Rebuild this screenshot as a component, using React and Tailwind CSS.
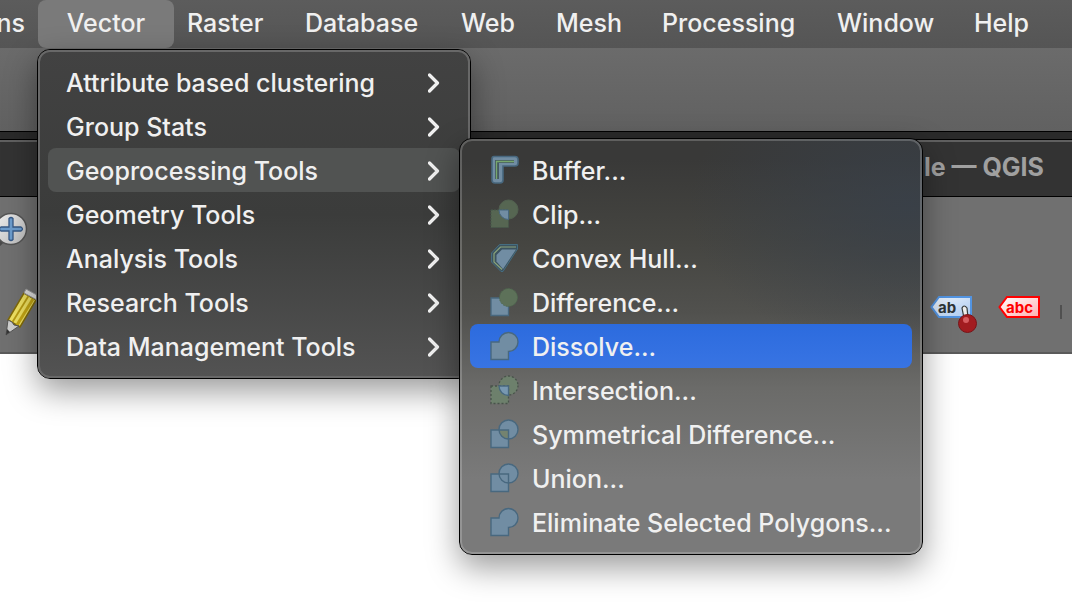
import React from "react";

const menuBar = [
  { label: "Raster", width: "w-[118px]" },
  { label: "Database", width: "w-[156px]" },
  { label: "Web", width: "w-[95px]" },
  { label: "Mesh", width: "w-[106px]" },
  { label: "Processing", width: "w-[175px]" },
  { label: "Window", width: "w-[137px]" },
  { label: "Help", width: "w-[98px]" },
];

const vectorMenu = [
  "Attribute based clustering",
  "Group Stats",
  "Geoprocessing Tools",
  "Geometry Tools",
  "Analysis Tools",
  "Research Tools",
  "Data Management Tools",
];

const tools = [
  { label: "Buffer...", icon: "buffer" },
  { label: "Clip...", icon: "clip" },
  { label: "Convex Hull...", icon: "hull" },
  { label: "Difference...", icon: "difference" },
  { label: "Dissolve...", icon: "dissolve" },
  { label: "Intersection...", icon: "intersection" },
  { label: "Symmetrical Difference...", icon: "symmetrical" },
  { label: "Union...", icon: "union" },
  { label: "Eliminate Selected Polygons...", icon: "dissolve" },
];

const BLUE = "#718da3";
const EDGE = "#48687f";
const GREEN = "#566652";

function ToolIcon({ name }) {
  const lens = "M9 11H18.5V20.5A9.5 9.5 0 0 1 9 11Z";
  const square = "M1 11H18.5V28.5H1Z";
  const merged = "M1 11H9A9.5 9.5 0 1 1 18.5 20.5V28.5H1Z";
  return (
    <svg className="h-[30px] w-[30px] shrink-0" viewBox="0 0 30 30" fill="none" aria-hidden="true">
      {name === "buffer" && (
        <>
          <path d="M4 1.500H25Q28 1.500 28 4.500V8Q28 11 25 11H13V25Q13 28 10 28H5Q2 28 2 25V4Q2 1.500 4 1.500Z" fill={BLUE} stroke={EDGE} strokeWidth="1.600" />
          <path d="M5 24V5H24V8H9V24Z" fill="#455a61" />
          <path d="M6.5 24V6.5H24" stroke="#77a76d" strokeWidth="1.3" />
        </>
      )}
      {name === "clip" && (
        <>
          <circle cx="18.5" cy="10.500" r="9.500" fill={GREEN} stroke="#526150" />
          <path d={square} fill={GREEN} stroke="#47584b" strokeDasharray="2 1" />
          <path d={lens} fill={BLUE} stroke={EDGE} />
        </>
      )}
      {name === "hull" && (
        <>
          <path d="M9.5 1.500H27.500V6L13 28.500H11L1.500 19V10Z" fill="#3c5360" stroke="#456d80" strokeWidth="1" />
          <path d="M26 4H10.500L4 10.500V19L12 26.500" stroke="#8ba47a" strokeWidth="1.2" />
          <path d="M12 6.500H26L13 26L6.500 18.500V12Z" fill={BLUE} />
        </>
      )}
      {name === "difference" && (
        <>
          <path d={square} fill={BLUE} stroke={EDGE} strokeWidth="1.3" />
          <circle cx="18.5" cy="10.500" r="9" fill="#5d7159" stroke="#4e674e" strokeDasharray="2 1" />
        </>
      )}
      {name === "dissolve" && <path d={merged} fill={BLUE} stroke={EDGE} strokeWidth="1.4" />}
      {name === "intersection" && (
        <>
          <circle cx="18.5" cy="10.500" r="9.500" fill="#6d806c" stroke="#48534a" strokeWidth="1.3" strokeDasharray="2 2" />
          <path d={square} fill="#6d806c" stroke="#48534a" strokeWidth="1.3" strokeDasharray="2 2" />
          <path d={lens} fill="#7898b1" stroke={EDGE} strokeWidth="1.3" />
        </>
      )}
      {(name === "symmetrical" || name === "union") && (
        <>
          <path d={square} fill={BLUE} />
          <circle cx="18.5" cy="10.500" r="9.500" fill={BLUE} />
          {name === "symmetrical" && <path d={lens} fill="#74836f" />}
          <path d={square} stroke={EDGE} strokeWidth="1.4" />
          <circle cx="18.5" cy="10.500" r="9.500" stroke={EDGE} strokeWidth="1.4" />
        </>
      )}
    </svg>
  );
}

function Chevron() {
  return (
    <svg className="h-5 w-3 shrink-0" viewBox="0 0 12 20" fill="none" aria-hidden="true">
      <path d="M1.500 2L9.500 10L1.500 18" stroke="#f0f0f0" strokeWidth="3.200" strokeLinecap="round" strokeLinejoin="round" />
    </svg>
  );
}

function ZoomIcon() {
  return (
    <svg className="h-9 w-7" viewBox="0 0 28 36" fill="none" aria-hidden="true">
      <defs>
        <linearGradient id="glass" x1="0" y1="0" x2="1" y2="1">
          <stop offset="0" stopColor="#eeeeee" />
          <stop offset="1" stopColor="#b9b9b9" />
        </linearGradient>
      </defs>
      <path d="M-2 32L3 27" stroke="#494949" strokeWidth="6" />
      <circle cx="11" cy="17" r="15.500" fill="url(#glass)" stroke="#545454" strokeWidth="1.500" />
      <path d="M9 6.500Q11 4.500 13 6.500V15H21Q24 17 21 19H13V27.500Q11 29.500 9 27.500V19H1Q-2 17 1 15H9Z" fill="#6c9ccc" stroke="#365884" strokeWidth="1.300" />
    </svg>
  );
}

function PencilIcon() {
  return (
    <svg className="h-12 w-9" viewBox="0 0 36 48" fill="none" aria-hidden="true">
      <path d="M24 5L36 12L20 39L8 32Z" fill="#eee062" stroke="#806a08" strokeWidth="1.500" />
      <path d="M28.500 8L12.500 34" stroke="#b79b13" strokeWidth="1.800" />
      <path d="M33 11L17 37" stroke="#c3a514" strokeWidth="3" />
      <path d="M26 1L37 7V12L24 5Z" fill="#dedede" stroke="#969696" />
      <path d="M8 32L12 34L14 37L19 38L6 47Z" fill="#cfcfcf" stroke="#555" />
      <path d="M7 41L10 44L6 47Z" fill="#343434" />
    </svg>
  );
}

function PinnedLabelIcon() {
  return (
    <svg className="h-10 w-12" viewBox="0 0 48 40" aria-hidden="true">
      <defs>
        <linearGradient id="blueTag" x1="0" y1="0" x2="1" y2="1">
          <stop offset="0" stopColor="#f1f6fc" />
          <stop offset="1" stopColor="#a8c8f0" />
        </linearGradient>
      </defs>
      <path d="M9 4H41V24H9L1.500 14Z" fill="url(#blueTag)" stroke="#5294e2" strokeWidth="2" />
      <text x="8" y="20" fontSize="15" fontWeight="700" fontFamily="Inter, sans-serif" fill="#2e3436">ab</text>
      <path d="M32 15Q34 11 37 15L38 25H34Z" fill="#eeeeec" stroke="#363b3b" strokeWidth="1.200" />
      <circle cx="37.500" cy="30.500" r="9" fill="#a21c20" stroke="#791418" />
      <circle cx="36" cy="27" r="3" fill="#d65c60" />
    </svg>
  );
}

function RedLabelIcon() {
  return (
    <svg className="h-10 w-11" viewBox="0 0 44 40" aria-hidden="true">
      <defs>
        <linearGradient id="redTag" x1="0" y1="0" x2="1" y2="1">
          <stop offset="0" stopColor="#ffffff" />
          <stop offset="1" stopColor="#ffb0b0" />
        </linearGradient>
      </defs>
      <path d="M9 4H41V24H9L1.500 14Z" fill="url(#redTag)" stroke="#ff0000" strokeWidth="2" />
      <text x="8" y="20" fontSize="15" fontWeight="700" fontFamily="Inter, sans-serif" fill="#ff0000">abc</text>
    </svg>
  );
}

function VectorMenu() {
  return (
    <div
      role="menu"
      aria-label="Vector"
      className="absolute left-[37px] top-[49px] w-[434px] rounded-[13px] border border-black bg-linear-to-b from-[#424242] via-[#3b3c3b] to-[#535353] shadow-[0_12px_32px_rgba(0,0,0,0.4)]"
    >
      <div className="rounded-xl border-2 border-[#686868] px-2 py-2">
        {vectorMenu.map((label) => (
          <button
            key={label}
            role="menuitem"
            className={`flex h-11 w-full items-center justify-between rounded-lg pl-[18px] pr-5 pt-[2px] ${label === "Geoprocessing Tools" ? "bg-[#515352]" : ""}`}
          >
            {label}
            <Chevron />
          </button>
        ))}
      </div>
    </div>
  );
}

function GeoprocessingMenu() {
  return (
    <div
      role="menu"
      aria-label="Geoprocessing Tools"
      className="absolute left-[459px] top-[138px] w-[464px] rounded-[13px] border border-black bg-[radial-gradient(220px_150px_at_97%_16%,rgba(56,64,74,0.8),rgba(56,64,74,0)),linear-gradient(to_bottom,#393938_5%,#454541_25%,#51514e_42%,#6b6b69_60%,#7a7a7a_82%)] shadow-[0_12px_32px_rgba(0,0,0,0.4)]"
    >
      <div className="rounded-xl border-2 border-white/20 px-2 pb-2 pt-[7px]">
        {tools.map(({ label, icon }) => (
          <button
            key={label}
            role="menuitem"
            className={`flex h-11 w-full items-center gap-3 rounded-lg pl-5 ${label === "Dissolve..." ? "bg-linear-to-b from-[#2c6bde] to-[#3874e3]" : ""}`}
          >
            <ToolIcon name={icon} />
            <span className="pt-[2px]">{label}</span>
          </button>
        ))}
      </div>
    </div>
  );
}

export default function App() {
  return (
    <div className="relative min-h-screen overflow-hidden whitespace-nowrap bg-white font-['Inter',sans-serif] text-[25px] font-medium leading-8 text-[#f0f0f0]">
      <nav className="flex h-12 items-stretch bg-linear-to-b from-[#5c5c5c] to-[#555555] pb-[2px] text-shadow-[0_2px_4px_rgba(0,0,0,0.3)]" aria-label="Menu bar">
        <button className="flex w-[38px] shrink-0 items-center justify-end pr-[13px]">ns</button>
        <button className="-mb-[2px] w-[136px] shrink-0 rounded-lg bg-[#7a7a7a] pb-[2px]" aria-expanded="true">Vector</button>
        {menuBar.map(({ label, width }) => (
          <button key={label} className={`${width} shrink-0 pl-[13px] text-left`}>{label}</button>
        ))}
      </nav>
      <div className="h-[83px] bg-linear-to-b from-[#6b6b6b] to-[#616161]" />
      <div className="h-[9px] border-y border-black bg-[#2a2a2a]" />
      <header className="flex h-[57px] items-center justify-end border-b border-t-2 border-b-black border-t-[#606060] bg-[#333333] pb-1 pr-7">
        <h1 className="font-bold text-[#a0a0a0]">le — QGIS</h1>
      </header>
      <div className="flex h-[157px] justify-between border-b-2 border-[#5a5a5a] bg-[#707070]">
        <div className="flex flex-col pt-[15px]">
          <button aria-label="Zoom in"><ZoomIcon /></button>
          <button aria-label="Toggle editing" className="mt-10"><PencilIcon /></button>
        </div>
        <div className="flex items-start gap-5 pr-[10px] pt-24">
          <button aria-label="Pin labels"><PinnedLabelIcon /></button>
          <div className="flex gap-[18px]">
            <button aria-label="Show unplaced labels"><RedLabelIcon /></button>
            <span className="mt-3 h-[14px] w-[2px] bg-[#505050]" />
          </div>
        </div>
      </div>
      <VectorMenu />
      <GeoprocessingMenu />
    </div>
  );
}
